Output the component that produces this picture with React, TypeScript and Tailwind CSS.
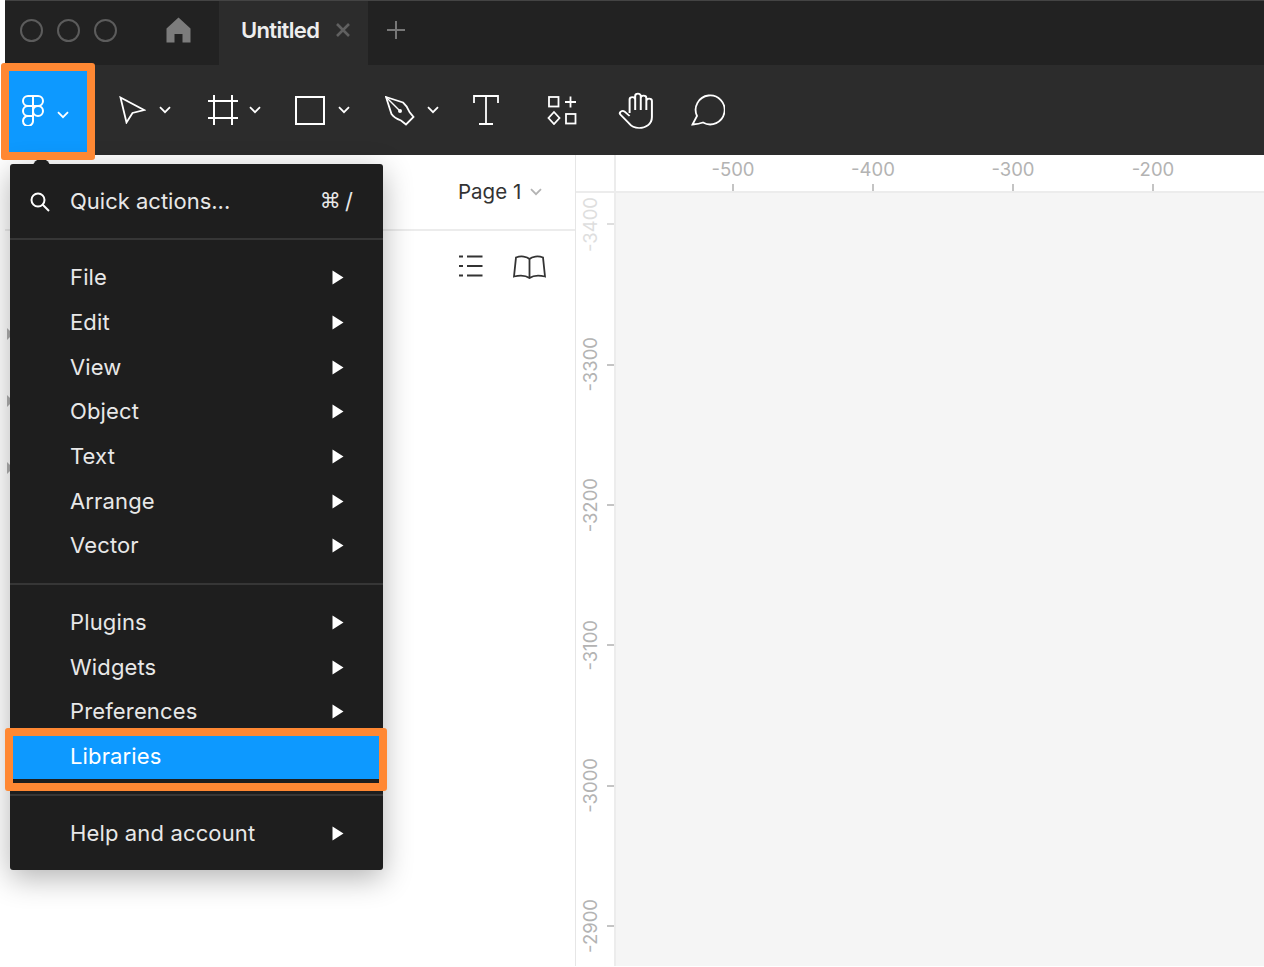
import React from "react";

const Chevron: React.FC<{ className?: string; color?: string }> = ({ className, color = "white" }) => (
  <svg width="12" height="8" viewBox="0 0 12 8" fill="none" className={className}>
    <path d="M1 1.2 6 6.2 11 1.2" stroke={color} strokeWidth="1.8" />
  </svg>
);

const Triangle = () => (
  <svg width="12" height="15" viewBox="0 0 12 15" className="ml-auto mr-[39px]">
    <path d="M0.5 0.5 11.5 7.5 0.5 14.5Z" fill="white" />
  </svg>
);

const MenuRow: React.FC<{ label: string; active?: boolean; arrow?: boolean }> = ({ label, active, arrow = true }) => (
  <div className={`flex h-[44.7px] items-center pl-[60px] ${active ? "bg-[#0d99ff] text-white" : ""}`}>
    <span>{label}</span>
    {arrow && <Triangle />}
  </div>
);

const MenuDivider = () => <div className="my-[15px] h-[2px] bg-[#363636]" />;

const hLabels = ["-500", "-400", "-300", "-200"];
const vLabels = ["-3400", "-3300", "-3200", "-3100", "-3000", "-2900"];

export default function App() {
  return (
    <div className="relative h-[967px] w-[1264px] overflow-hidden bg-white font-[family-name:Inter,sans-serif]">
      <div className="flex h-[966px] flex-col pl-[5px]">
        {/* title bar */}
        <div className="flex h-[65px] shrink-0 items-center border-t border-[#444] bg-[#222] pb-[6px]">
          <div className="ml-[15px] h-[23px] w-[23px] rounded-full border-2 border-[#5c5c5c]" />
          <div className="ml-[14px] h-[23px] w-[23px] rounded-full border-2 border-[#5c5c5c]" />
          <div className="ml-[14px] h-[23px] w-[23px] rounded-full border-2 border-[#5c5c5c]" />
          <svg width="25" height="26" viewBox="0 0 25 26" className="ml-[49px]">
            <path d="M12.5 0.5 24.5 11.5V25.5H16.5V17H8.5V25.5H0.5V11.5Z" fill="#7c7c7c" />
          </svg>
          <div className="-mb-[6px] ml-[28px] flex w-[149px] items-center self-stretch bg-[#2c2c2c] pb-[6px] pl-[22px]">
            <span className="text-[22px] font-semibold tracking-[-0.65px] text-[#eeeeee]">Untitled</span>
            <svg width="14" height="14" viewBox="0 0 14 14" className="ml-[17px]">
              <path d="M1 1 13 13M13 1 1 13" stroke="#606060" strokeWidth="2.6" />
            </svg>
          </div>
          <svg width="18" height="18" viewBox="0 0 18 18" className="ml-[19px]">
            <path d="M9 0V18M0 9H18" stroke="#777" strokeWidth="2" />
          </svg>
        </div>

        {/* toolbar */}
        <div className="flex h-[90px] shrink-0 items-center bg-[#2c2c2c]">
          <div className="flex h-full w-[82px] bg-[#0d99ff] pl-[17px] pt-[30px]">
            <svg width="22" height="31" viewBox="0 0 22 31" fill="none" stroke="white" strokeWidth="2">
              <path d="M11 1H6a5 5 0 0 0 0 10h5Z" />
              <path d="M11 1h5a5 5 0 0 1 0 10h-5Z" />
              <path d="M11 11H6a5 5 0 0 0 0 10h5Z" />
              <circle cx="16" cy="16" r="5" />
              <path d="M6 21h5v4.5a5 5 0 1 1-5-4.5Z" />
            </svg>
            <Chevron className="ml-[13px] mt-[16px]" />
          </div>
          <svg width="27" height="28" viewBox="0 0 27 28" fill="none" className="ml-[32px]">
            <path d="M1.5 1.5 25 14 13.5 17 7.5 26.5Z" stroke="white" strokeWidth="1.8" />
          </svg>
          <Chevron className="ml-[13px]" />
          <svg width="30" height="30" viewBox="0 0 30 30" className="ml-[37px]">
            <path d="M6 0V30M24 0V30M0 6H30M0 23H30" stroke="white" strokeWidth="2" fill="none" />
          </svg>
          <Chevron className="ml-[11px]" />
          <div className="ml-[34px] h-[29px] w-[30px] border-2 border-white" />
          <Chevron className="ml-[13px]" />
          <svg width="30" height="30" viewBox="0 0 30 30" fill="none" className="ml-[35px] mt-[1px]">
            <path d="M1 1 18 6.5C21 9 23 12 24.5 16L28.5 21 21 28.5 16 24.5C12 23 8.5 21 6.5 18Z" stroke="white" strokeWidth="1.8" />
            <path d="M1 1 14 14" stroke="white" strokeWidth="1.4" />
            <circle cx="15" cy="15" r="2" fill="white" />
          </svg>
          <Chevron className="ml-[12px]" />
          <svg width="26" height="30" viewBox="0 0 26 30" fill="none" className="ml-[34px]">
            <path d="M1 8V1H25V8M13 1V29M6 29H20" stroke="white" strokeWidth="1.8" />
          </svg>
          <svg width="30" height="29" viewBox="0 0 30 29" fill="none" className="ml-[48px]">
            <rect x="2" y="1" width="9.5" height="9.5" stroke="white" strokeWidth="1.8" />
            <path d="M18 6H29M23.5 0.5V11.5" stroke="white" strokeWidth="1.8" />
            <path d="M7 16 12.5 22 7 28 1.5 22Z" stroke="white" strokeWidth="1.8" />
            <rect x="19" y="18" width="9.5" height="9.5" stroke="white" strokeWidth="1.8" />
          </svg>
          <svg width="36" height="38" viewBox="0 0 31 38" preserveAspectRatio="none" fill="none" className="ml-[41px] mt-[1px]">
            <path
              d="M10 21V7.5a2.4 2.4 0 0 1 4.8 0V18M14.8 18V4a2.4 2.4 0 0 1 4.8 0V18M19.6 18V6a2.4 2.4 0 0 1 4.8 0V18M24.4 18V9a2.4 2.4 0 0 1 4.8 0V25c0 7-5 11-11 11c-5 0-7-2-9-5L2 22.5c-1.5-2 1.5-4.5 3.5-3L10 24"
              stroke="white"
              strokeWidth="1.7"
            />
          </svg>
          <svg width="34" height="32" viewBox="0 0 34 32" fill="none" className="ml-[37px]">
            <path d="M1.5 30.5 6 22A14.5 14.5 0 1 1 12 28.5Q8 30 1.5 30.5Z" stroke="white" strokeWidth="1.8" />
          </svg>
        </div>

        <div className="flex min-h-0 flex-1">
          {/* left panel */}
          <div className="flex w-[571px] shrink-0 flex-col border-r border-[#e6e6e6]">
            <div className="flex h-[76px] shrink-0 items-center border-b-2 border-[#ececec] pl-[453px]">
              <span className="text-[20.5px] text-[#333]">Page 1</span>
              <Chevron className="ml-[9px]" color="#b3b3b3" />
            </div>
            <div className="flex shrink-0 pl-[453px] pt-[24px]">
              <svg width="25" height="22" viewBox="0 0 25 22" fill="none" stroke="#333" strokeWidth="1.8">
                <path d="M1 1.5H5M1 11H5M1 20.5H5M9 1.5H24.5M9 11H24.5M9 20.5H24.5" />
              </svg>
              <svg width="33" height="24" viewBox="0 0 33 24" fill="none" stroke="#333" strokeWidth="1.8" className="ml-[30px]">
                <path d="M16.5 4C14 1.5 8 0.5 3 2.5L1 21.5C7 20 13 20.5 16.5 23C20 20.5 26 20 32 21.5L30 2.5C25 0.5 19 1.5 16.5 4ZM16.5 4V23" />
              </svg>
            </div>
            <div className="mt-[49px] flex flex-col gap-[55px] pl-[2px]">
              <div className="h-0 w-0 border-y-[6px] border-l-[6px] border-y-transparent border-l-[#b0b0b0]" />
              <div className="h-0 w-0 border-y-[6px] border-l-[6px] border-y-transparent border-l-[#b0b0b0]" />
              <div className="h-0 w-0 border-y-[6px] border-l-[6px] border-y-transparent border-l-[#b0b0b0]" />
            </div>
          </div>

          {/* rulers + canvas */}
          <div className="flex min-w-0 flex-1 flex-col">
            <div className="flex h-[38px] shrink-0 border-b-2 border-[#ececec]">
              <div className="w-[39.5px] shrink-0 border-r-2 border-[#ececec]" />
              <div className="flex pl-[47.5px]">
                {hLabels.map((l) => (
                  <div key={l} className="flex h-full w-[140px] flex-col items-center justify-end">
                    <span className="mb-[3px] text-[18.5px] leading-[24px] text-[#b3b3b3]">{l}</span>
                    <div className="h-[7px] w-[2px] bg-[#c4c4c4]" />
                  </div>
                ))}
              </div>
            </div>
            <div className="flex min-h-0 flex-1">
              <div className="w-[39.5px] shrink-0 border-r-2 border-[#ececec]">
                {vLabels.map((l, i) => (
                  <div key={l} className="flex h-[140.4px] items-center justify-end first:-mt-[39px]">
                    <span
                      className={`mr-[5px] rotate-180 text-[18.5px] leading-[24px] [writing-mode:vertical-rl] ${
                        i === 0 ? "text-[#dedede]" : "text-[#b3b3b3]"
                      }`}
                    >
                      {l}
                    </span>
                    <div className={`h-[2px] w-[7px] shrink-0 ${i === 0 ? "bg-[#dedede]" : "bg-[#c4c4c4]"}`} />
                  </div>
                ))}
              </div>
              <div className="flex-1 bg-[#f5f5f5]" />
            </div>
          </div>
        </div>
      </div>

      {/* main menu, opened over the panel */}
      <div className="absolute left-[10px] top-[164px] w-[373px] rounded-[3px] bg-[#1e1e1e] text-[22px] tracking-[0.14px] text-[#e8e8e8] shadow-[0_8px_30px_rgba(0,0,0,0.3)]">
        <div className="flex h-[74px] items-center pl-[20px] pt-[1px]">
          <svg width="20" height="20" viewBox="0 0 20 20" fill="none" stroke="white" strokeWidth="2">
            <circle cx="8" cy="8" r="6.5" />
            <path d="M12.5 12.5 19 19" />
          </svg>
          <span className="ml-[20px] tracking-normal">Quick actions...</span>
          <span className="ml-auto mr-[30px] flex items-center">
            <span className="font-[family-name:'DejaVu_Sans',sans-serif] text-[21px]">⌘</span>
            <span className="ml-[4px]">/</span>
          </span>
        </div>
        <div className="h-[2px] bg-[#363636]" />
        <div className="mt-[15.4px]">
          {["File", "Edit", "View", "Object", "Text", "Arrange", "Vector"].map((l) => (
            <MenuRow key={l} label={l} />
          ))}
        </div>
        <MenuDivider />
        {["Plugins", "Widgets", "Preferences"].map((l) => (
          <MenuRow key={l} label={l} />
        ))}
        <MenuRow label="Libraries" active arrow={false} />
        <MenuDivider />
        <div className="pb-[14.6px]">
          <MenuRow label="Help and account" />
        </div>
      </div>

      {/* pointer of the menu */}
      <div className="absolute left-[33px] top-[159px] h-[8px] w-[17px] rounded-t-full bg-[#1e1e1e]" />

      {/* orange highlights */}
      <div className="absolute left-[1px] top-[63px] h-[97px] w-[94px] rounded-[3px] border-[8px] border-[#ff8833]" />
      <div className="absolute left-[5px] top-[728px] h-[63px] w-[382px] rounded-[3px] border-[8px] border-[#ff8833]" />
    </div>
  );
}
